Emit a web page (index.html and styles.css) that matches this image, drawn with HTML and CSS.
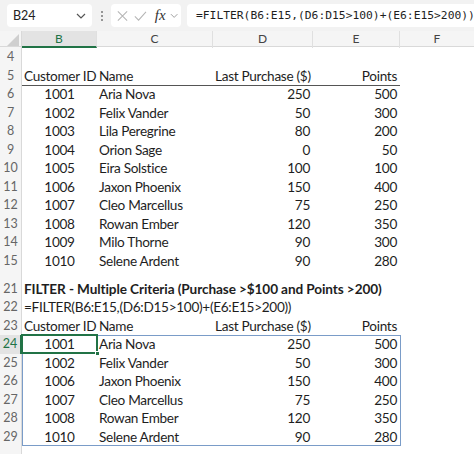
FILE: index.html
```html
<!DOCTYPE html>
<html>
<head>
<meta charset="utf-8">
<link rel="stylesheet" href="styles.css">
</head>
<body>
<div class="app">
  <div class="fbar">
    <div class="namebox">
      <span>B24</span>
      <svg class="chev" width="10" height="6" viewBox="0 0 10 6"><path d="M1 1 L5 5 L9 1" fill="none" stroke="#555" stroke-width="1.2"/></svg>
    </div>
    <div class="vdots"><i></i><i></i><i></i></div>
    <div class="fxbox">
      <svg width="14" height="14" viewBox="0 0 14 14"><path d="M2 2 L12 12 M12 2 L2 12" stroke="#b5b5b5" stroke-width="1.1" fill="none"/></svg>
      <svg width="16" height="14" viewBox="0 0 16 14"><path d="M2 7.5 L6 11.5 L14 2.5" stroke="#b5b5b5" stroke-width="1.1" fill="none"/></svg>
      <span class="fx">fx</span>
      <svg class="chev2" width="9" height="6" viewBox="0 0 9 6"><path d="M1 1 L4.5 4.5 L8 1" fill="none" stroke="#999" stroke-width="1"/></svg>
    </div>
    <div class="formula">=FILTER(B6:E15,(D6:D15&gt;100)+(E6:E15&gt;200))</div>
  </div>

  <div class="colhead">
    <div class="corner"><svg width="12" height="12" viewBox="0 0 12 12"><path d="M12 0 L12 12 L0 12 Z" fill="#cfcfcf"/></svg></div>
    <div class="ch sel">B</div>
    <div class="ch">C</div>
    <div class="ch">D</div>
    <div class="ch">E</div>
    <div class="ch last">F</div>
  </div>

  <div class="row r4"><div class="rn">4</div><div></div><div></div><div></div><div></div><div></div></div>
  <div class="row hdr"><div class="rn">5</div><div class="c l">Customer ID</div><div class="c l">Name</div><div class="c r">Last Purchase ($)</div><div class="c r">Points</div><div></div></div>
  <div class="row"><div class="rn">6</div><div class="c m">1001</div><div class="c l">Aria Nova</div><div class="c r">250</div><div class="c r">500</div><div></div></div>
  <div class="row"><div class="rn">7</div><div class="c m">1002</div><div class="c l">Felix Vander</div><div class="c r">50</div><div class="c r">300</div><div></div></div>
  <div class="row"><div class="rn">8</div><div class="c m">1003</div><div class="c l">Lila Peregrine</div><div class="c r">80</div><div class="c r">200</div><div></div></div>
  <div class="row"><div class="rn">9</div><div class="c m">1004</div><div class="c l">Orion Sage</div><div class="c r">0</div><div class="c r">50</div><div></div></div>
  <div class="row"><div class="rn">10</div><div class="c m">1005</div><div class="c l">Eira Solstice</div><div class="c r">100</div><div class="c r">100</div><div></div></div>
  <div class="row"><div class="rn">11</div><div class="c m">1006</div><div class="c l">Jaxon Phoenix</div><div class="c r">150</div><div class="c r">400</div><div></div></div>
  <div class="row"><div class="rn">12</div><div class="c m">1007</div><div class="c l">Cleo Marcellus</div><div class="c r">75</div><div class="c r">250</div><div></div></div>
  <div class="row"><div class="rn">13</div><div class="c m">1008</div><div class="c l">Rowan Ember</div><div class="c r">120</div><div class="c r">350</div><div></div></div>
  <div class="row"><div class="rn">14</div><div class="c m">1009</div><div class="c l">Milo Thorne</div><div class="c r">90</div><div class="c r">300</div><div></div></div>
  <div class="row"><div class="rn">15</div><div class="c m">1010</div><div class="c l">Selene Ardent</div><div class="c r">90</div><div class="c r">280</div><div></div></div>
  <div class="row gap"><div class="rn"></div><div></div><div></div><div></div><div></div><div></div></div>
  <div class="row"><div class="rn">21</div><div class="c l wide bold">FILTER - Multiple Criteria (Purchase &gt;$100 and Points &gt;200)</div></div>
  <div class="row"><div class="rn">22</div><div class="c l wide">=FILTER(B6:E15,(D6:D15&gt;100)+(E6:E15&gt;200))</div></div>
  <div class="row"><div class="rn">23</div><div class="c l">Customer ID</div><div class="c l">Name</div><div class="c r">Last Purchase ($)</div><div class="c r">Points</div><div></div></div>
  <div class="spill">
    <div class="row"><div class="rn act">24</div><div class="c m">1001</div><div class="c l">Aria Nova</div><div class="c r">250</div><div class="c r">500</div><div></div></div>
    <div class="row"><div class="rn">25</div><div class="c m">1002</div><div class="c l">Felix Vander</div><div class="c r">50</div><div class="c r">300</div><div></div></div>
    <div class="row"><div class="rn">26</div><div class="c m">1006</div><div class="c l">Jaxon Phoenix</div><div class="c r">150</div><div class="c r">400</div><div></div></div>
    <div class="row"><div class="rn">27</div><div class="c m">1007</div><div class="c l">Cleo Marcellus</div><div class="c r">75</div><div class="c r">250</div><div></div></div>
    <div class="row"><div class="rn">28</div><div class="c m">1008</div><div class="c l">Rowan Ember</div><div class="c r">120</div><div class="c r">350</div><div></div></div>
    <div class="row"><div class="rn">29</div><div class="c m">1010</div><div class="c l">Selene Ardent</div><div class="c r">90</div><div class="c r">280</div><div></div></div>
    <div class="spill-border"></div>
    <div class="active-cell"><span class="handle"></span></div>
  </div>
  <div class="row tail"><div class="rn"></div><div></div><div></div><div></div><div></div><div></div></div>
</div>
</body>
</html>
```

FILE: styles.css
```css
* { box-sizing: border-box; }
html, body { margin: 0; padding: 0; background: #fff; }
body { font-family: Lato, "Open Sans", sans-serif; color: #1e1e1e; width: 474px; height: 454px; overflow: hidden; }

.app { width: 474px; }

.fbar {
  height: 31px;
  background: #f2f2f2;
  display: flex;
  align-items: center;
  padding: 0 0 0 7px;
}
.namebox {
  width: 85px; height: 23px;
  background: #fff;
  border-radius: 4px;
  display: flex; align-items: center; justify-content: space-between;
  padding: 0 6px 0 6px;
  font-size: 12.5px; color: #222;
}
.chev { margin-top: 1px; }
.vdots {
  width: 19px; display: flex; flex-direction: column; align-items: center; gap: 2px;
}
.vdots i { display: block; width: 2px; height: 2px; background: #777; border-radius: 1px; }
.fxbox {
  width: 70px; height: 23px;
  background: #fff; border-radius: 4px;
  display: flex; align-items: center; gap: 4px;
  padding: 0 3px 0 5px;
}
.fx { font-family: "Liberation Serif", serif; font-style: italic; font-size: 15px; color: #333; margin-left: 3px; }
.chev2 { margin-left: 0; }
.formula {
  flex: 1; height: 23px; margin-left: 6px;
  background: #fff; border-radius: 4px 0 0 4px;
  display: flex; align-items: center;
  padding-left: 9px;
  font-family: "DejaVu Sans Mono", monospace; font-size: 11.3px; color: #1e1e1e;
  white-space: nowrap; overflow: hidden;
}

.colhead {
  height: 16px;
  display: grid;
  grid-template-columns: 22px 75px 116px 100px 87px 1fr;
  background: #f5f5f5;
  border-bottom: 1px solid #d9d9d9;
}
.corner { display: flex; align-items: flex-end; justify-content: flex-end; padding: 0 2px 2px 0; border-right: 1px solid #d9d9d9; }
.ch {
  font-size: 12px; color: #444; text-align: center; line-height: 15px;
  border-right: 1px solid #e0e0e0;
}
.ch.last { border-right: none; }
.ch.sel { background: #e3e3e3; color: #217346; border-bottom: 2px solid #217346; line-height: 15px; }

.row {
  display: grid;
  grid-template-columns: 22px 75px 116px 100px 87px 1fr;
  height: 18.5px;
  font-size: 13.6px;
  letter-spacing: -0.3px;
  line-height: 18.5px;
}
.row.r4 { height: 19.75px; }
.row.gap { height: 9.5px; }
.row.tail { height: 8px; }
.rn {
  background: #f5f5f5;
  border-right: 1px solid #d9d9d9;
  color: #666;
  font-size: 12.5px;
  letter-spacing: 0;
  text-align: center;
  line-height: 18.5px;
}
.r4 .rn { line-height: 19.75px; }
.rn.act { color: #217346; background: #e3e3e3; border-right: 2px solid #217346; }
.c { white-space: nowrap; padding: 0 2px; overflow: visible; }
.l { text-align: left; }
.r { text-align: right; padding-right: 3px; }
.m { text-align: center; }
.wide { grid-column: 2 / 7; }
.bold { font-weight: 700; letter-spacing: -0.1px; }

.hdr .c { border-bottom: 1.5px solid #555; }

.spill { position: relative; }
.spill-border {
  position: absolute; left: 22px; top: 0; width: 379px; height: 100%;
  border: 1px solid #7a9cc8;
  pointer-events: none;
}
.active-cell {
  position: absolute; left: 21px; top: -1px; width: 77px; height: 20px;
  border: 2px solid #217346;
}
.handle {
  position: absolute; right: -4px; bottom: -4px; width: 5px; height: 5px;
  background: #217346; border: 1px solid #fff;
}
```
